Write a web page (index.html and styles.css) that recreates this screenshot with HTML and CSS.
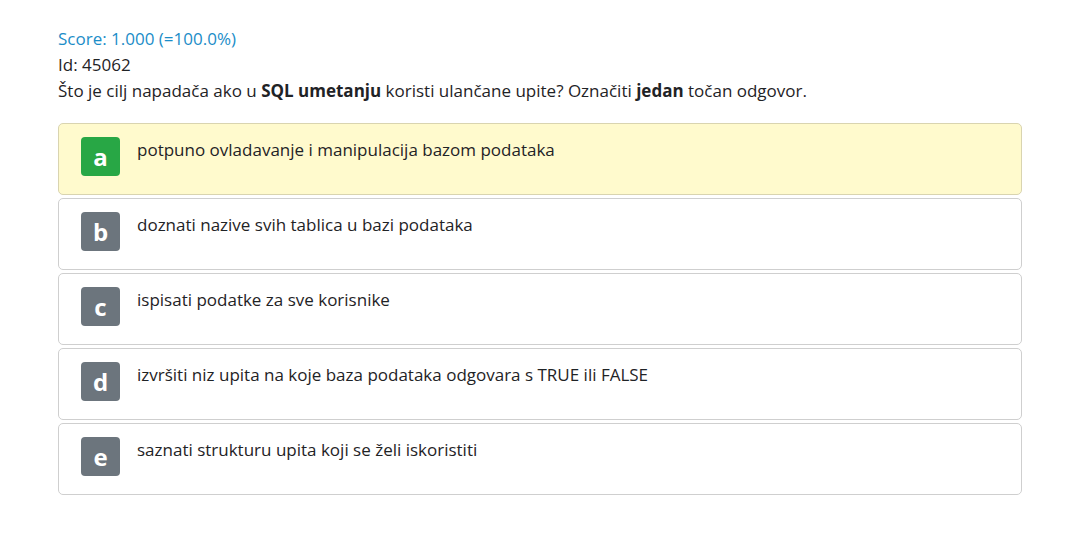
FILE: index.html
```html
<!DOCTYPE html>
<html lang="hr">
<head>
<meta charset="utf-8">
<link rel="stylesheet" href="styles.css">
</head>
<body>
<div class="page">
  <div class="score">Score: 1.000 (=100.0%)</div>
  <div class="id">Id: 45062</div>
  <div class="question">Što je cilj napadača ako u <b>SQL umetanju</b> koristi ulančane upite? Označiti <b>jedan</b> točan odgovor.</div>
  <div class="answers">
    <div class="answer correct"><span class="badge green">a</span><span class="text">potpuno ovladavanje i manipulacija bazom podataka</span></div>
    <div class="answer"><span class="badge">b</span><span class="text">doznati nazive svih tablica u bazi podataka</span></div>
    <div class="answer"><span class="badge">c</span><span class="text">ispisati podatke za sve korisnike</span></div>
    <div class="answer"><span class="badge">d</span><span class="text">izvršiti niz upita na koje baza podataka odgovara s TRUE ili FALSE</span></div>
    <div class="answer"><span class="badge">e</span><span class="text">saznati strukturu upita koji se želi iskoristiti</span></div>
  </div>
</div>
</body>
</html>
```
FILE: styles.css
```css
html, body { margin: 0; padding: 0; background: #fff; }
body {
  font-family: "Open Sans", "Noto Sans", sans-serif;
  font-size: 17px;
  color: #1f2326;
}
.page { padding: 26px 58px 0 58px; width: 964px; }
.score, .id, .question { line-height: 26px; }
.score { color: #1b8dc8; }
.question b { font-weight: 700; }
.answers { margin-top: 19px; display: flex; flex-direction: column; gap: 3px; }
.answer {
  display: flex;
  align-items: flex-start;
  gap: 17px;
  height: 72px;
  box-sizing: border-box;
  padding: 13px 22px;
  border: 1px solid #cfcfcf;
  border-radius: 5px;
  background: #fff;
}
.answer.correct { background: #fffacd; border-color: #d9d4b0; }
.badge {
  flex: none;
  width: 39px; height: 39px;
  border-radius: 4px;
  background: #6c757d;
  color: #fff;
  font-weight: 700;
  font-size: 24px;
  display: flex; align-items: center; justify-content: center;
}
.badge.green { background: #28a745; }
.text { line-height: 26px; }
```
